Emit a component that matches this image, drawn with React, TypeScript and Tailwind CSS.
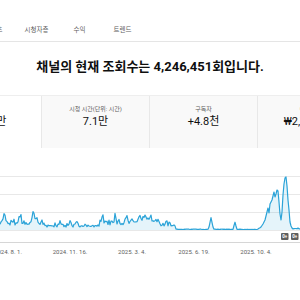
import React from 'react';

const BASE = 72; // zero line inside the chart svg

const rnd = (i: number) => {
  const s = Math.sin(i * 12.9898 + 78.233) * 43758.5453;
  return s - Math.floor(s);
};

// [from, to, level, noise]
const segments: [number, number, number, number][] = [
  [0, 30, 5, 5],
  [30, 45, 5, 5],
  [45, 100, 3, 3],
  [100, 130, 5, 5],
  [130, 160, 8, 6],
  [160, 176, 4, 3],
  [176, 258, 0.5, 0.4],
  [293, 301, 1, 1],
];

// [x, height, half width]
const bumps: [number, number, number][] = [
  [4, 10, 1.5],
  [20, 7, 1.5],
  [33, 11, 1.5],
  [36, 6, 1.5],
  [60, 4, 1.5],
  [70, 4, 1.5],
  [76, 4, 1.5],
  [102, 6, 1.5],
  [115, 4, 1.5],
  [127, 8, 1.5],
  [140, 5, 2],
  [145, 6, 2],
  [150, 4, 1.5],
  [166, 3, 1],
  [211, 12, 1.5],
  [235, 7, 1],
];

const peak: [number, number][] = [
  [258, 1], [261, 3], [263, 6], [265, 10], [267, 18], [268, 22], [269, 17],
  [270, 26], [272, 30], [274, 38], [275, 33], [276, 36], [277, 40], [278, 39],
  [279, 28], [280, 16], [281, 10], [282, 18], [283, 35], [284, 46], [285, 52],
  [286, 53], [287, 44], [288, 30], [289, 20], [290, 8], [291, 4], [292, 2], [293, 1],
];

function heightAt(x: number) {
  if (x >= 258 && x <= 293) {
    for (let i = 0; i < peak.length - 1; i++) {
      const [x0, h0] = peak[i];
      const [x1, h1] = peak[i + 1];
      if (x >= x0 && x <= x1) return h0 + ((h1 - h0) * (x - x0)) / (x1 - x0);
    }
  }
  const seg = segments.find(([a, b]) => x >= a && x < b);
  let h = seg ? seg[2] + seg[3] * rnd(x) * rnd(x + 7) * 1.6 : 1;
  bumps.forEach(([bx, bh, w]) => {
    const d = Math.abs(x - bx);
    if (d < w + 1) h += bh * Math.max(0, 1 - d / (w + 1));
  });
  return h;
}

const pts = Array.from({ length: 301 }, (_, x) => [x, BASE - heightAt(x)]);
const line = pts.map(([x, y], i) => `${i ? 'L' : 'M'}${x},${y.toFixed(1)}`).join(' ');
const area = `${line} L300,${BASE} L0,${BASE} Z`;

const tabs = ['콘텐츠', '시청자층', '수익', '트렌드'];

const cards = [
  { label: '조회수', value: '424.6만', active: true },
  { label: '시청 시간(단위: 시간)', value: '7.1만' },
  { label: '구독자', value: '+4.8천' },
  { label: '예상 수익', value: '₩2,737,254' },
];

const dates = ['2024. 8. 1.', '2024. 11. 16.', '2025. 3. 4.', '2025. 6. 19.', '2025. 10. 4.', '2025. 12. 20.'];

export default function App() {
  return (
    <div className="w-[300px] h-[300px] overflow-hidden bg-white font-['Roboto','Noto_Sans_CJK_KR',sans-serif] text-[#0f0f0f]">
      {/* Tabs */}
      <div className="h-[42px] pt-[18px] flex items-center border-b border-[#e5e5e5]">
        <div className="flex ml-[-28px]">
          {tabs.map((t) => (
            <div key={t} className="w-[43px] shrink-0 text-center text-[6.5px] leading-[10px] text-[#606060]">
              {t}
            </div>
          ))}
        </div>
      </div>

      {/* Headline */}
      <h1 className="mt-[15px] text-center text-[13px] leading-[20px] font-bold whitespace-nowrap">
        채널의 현재 조회수는 4,246,451회입니다.
      </h1>

      {/* Metric cards */}
      <div className="mt-[18px] h-[53px] flex ml-[-66px] border-t border-[#eeeeee]">
        {cards.map((c) => (
          <div
            key={c.label}
            className={`shrink-0 flex flex-col items-center pt-[9px] gap-[2px] ${
              c.active ? 'w-[107px] bg-white' : 'w-[108px] bg-[#f9f9f9] border-l border-[#e8e8e8]'
            }`}
          >
            <div className="text-[6px] leading-[8px] text-[#606060] whitespace-nowrap">{c.label}</div>
            <div className="text-[11px] leading-[14px] whitespace-nowrap">{c.value}</div>
          </div>
        ))}
      </div>

      {/* Chart */}
      <svg className="mt-[10px] block" width="300" height="85" viewBox="0 0 300 85">
        {[18, 36, 54, 72].map((y) => (
          <line key={y} x1="0" x2="300" y1={y + 0.5} y2={y + 0.5} stroke="#e8e8e8" strokeWidth="1" />
        ))}
        <line x1="0" x2="300" y1="84.5" y2="84.5" stroke="#d6d6d6" strokeWidth="1" />
        <path d={area} fill="#2ba3d8" fillOpacity="0.12" />
        <path d={line} fill="none" stroke="#2ba3d8" strokeWidth="1.2" strokeLinejoin="round" />
        {[281, 291].map((x) => (
          <g key={x}>
            <rect x={x} y="75" width="7.5" height="7" rx="1" fill="#5f5f5f" />
            <text x={x + 3.75} y="80.3" textAnchor="middle" fontSize="4.5" fill="#ffffff" fontFamily="Roboto, sans-serif" fontWeight="700">
              0+
            </text>
          </g>
        ))}
      </svg>

      {/* Date axis */}
      <div className="mt-[5px] flex ml-[-23px]">
        {dates.map((d) => (
          <div key={d} className="w-[62px] shrink-0 text-center text-[6px] leading-[8px] text-[#606060] whitespace-nowrap">
            {d}
          </div>
        ))}
      </div>
    </div>
  );
}
